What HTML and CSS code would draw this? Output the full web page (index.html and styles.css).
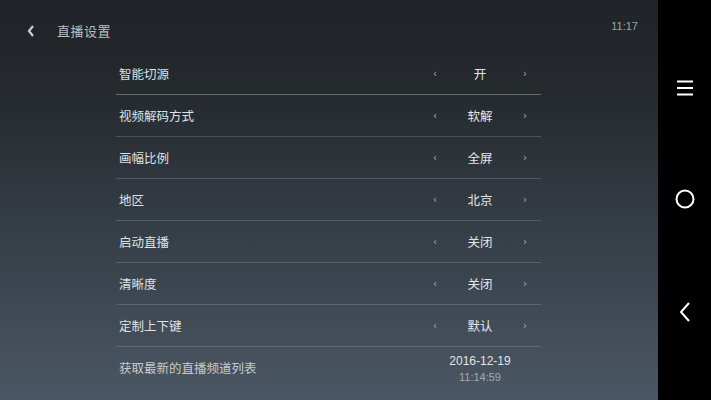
FILE: index.html
```html
<!DOCTYPE html>
<html lang="zh">
<head>
<meta charset="utf-8">
<link rel="stylesheet" href="styles.css">
</head>
<body>
<div class="screen">
  <div class="main">
    <div class="header">
      <svg class="back" width="10" height="14" viewBox="0 0 10 14"><path d="M7 2 L3 7 L7 12" fill="none" stroke="#c9cdd0" stroke-width="2.2"/></svg>
      <span class="title">直播设置</span>
      <span class="clock">11:17</span>
    </div>
    <div class="list">
      <div class="row first"><span class="label">智能切源</span><div class="sel"><span class="ch">‹</span><span class="val">开</span><span class="ch">›</span></div></div>
      <div class="row"><span class="label">视频解码方式</span><div class="sel"><span class="ch">‹</span><span class="val">软解</span><span class="ch">›</span></div></div>
      <div class="row"><span class="label">画幅比例</span><div class="sel"><span class="ch">‹</span><span class="val">全屏</span><span class="ch">›</span></div></div>
      <div class="row"><span class="label">地区</span><div class="sel"><span class="ch">‹</span><span class="val">北京</span><span class="ch">›</span></div></div>
      <div class="row"><span class="label">启动直播</span><div class="sel"><span class="ch">‹</span><span class="val">关闭</span><span class="ch">›</span></div></div>
      <div class="row"><span class="label">清晰度</span><div class="sel"><span class="ch">‹</span><span class="val">关闭</span><span class="ch">›</span></div></div>
      <div class="row"><span class="label">定制上下键</span><div class="sel"><span class="ch">‹</span><span class="val">默认</span><span class="ch">›</span></div></div>
      <div class="row last"><span class="label dim">获取最新的直播频道列表</span><div class="stamp"><span class="date">2016-12-19</span><span class="time">11:14:59</span></div></div>
    </div>
  </div>
  <div class="nav">
    <svg width="20" height="18" viewBox="0 0 20 18"><path d="M2 2.5H18M2 9H18M2 15.5H18" stroke="#fff" stroke-width="2"/></svg>
    <svg width="22" height="22" viewBox="0 0 22 22"><circle cx="11" cy="11" r="8.5" fill="none" stroke="#fff" stroke-width="2"/></svg>
    <svg width="14" height="22" viewBox="0 0 14 22"><path d="M11 2 L3 11 L11 20" fill="none" stroke="#fff" stroke-width="2"/></svg>
  </div>
</div>
</body>
</html>
```
FILE: styles.css
```css
html, body {
  margin: 0;
  padding: 0;
  width: 711px;
  height: 400px;
  overflow: hidden;
  background: #000;
  font-family: "Noto Sans CJK SC", "Noto Sans", sans-serif;
}
.screen {
  display: flex;
  width: 711px;
  height: 400px;
}
.main {
  width: 658px;
  height: 400px;
  background: linear-gradient(180deg, #202327 0%, #262b30 25%, #343c44 55%, #4b5764 100%);
  display: flex;
  flex-direction: column;
}
.header {
  height: 52px;
  display: flex;
  align-items: flex-start;
  padding: 0 20px 0 26px;
  box-sizing: border-box;
}
.back {
  margin-top: 24px;
}
.title {
  margin-left: 21px;
  margin-top: 21px;
  font-size: 13px;
  line-height: 19px;
  color: #b9bec2;
  letter-spacing: 0.5px;
}
.clock {
  margin-left: auto;
  margin-top: 19px;
  font-family: "Liberation Sans", sans-serif;
  font-size: 11px;
  line-height: 15px;
  color: #9ea3a7;
}
.list {
  margin-left: 116px;
  width: 425px;
  display: flex;
  flex-direction: column;
}
.row {
  height: 42px;
  display: flex;
  align-items: center;
  border-top: 1px solid rgba(150, 160, 168, 0.32);
  box-sizing: border-box;
}
.row.first {
  border-top: none;
}
.row.first + .row {
  border-top: 1px solid rgba(140, 165, 150, 0.55);
}
.label {
  padding-left: 3px;
  font-size: 12.5px;
  color: #dfe2e4;
  flex: 1;
}
.label.dim {
  color: #c5cacd;
}
.sel {
  display: flex;
  align-items: center;
  width: 100px;
  margin-right: 11px;
}
.ch {
  font-family: "DejaVu Sans", sans-serif;
  font-size: 10px;
  color: #a9afb3;
  width: 10px;
  text-align: center;
}
.val {
  flex: 1;
  text-align: center;
  font-size: 12.5px;
  color: #e3e6e8;
}
.stamp {
  width: 100px;
  margin-right: 11px;
  display: flex;
  flex-direction: column;
  align-items: center;
  font-family: "Liberation Sans", sans-serif;
  line-height: 16px;
  margin-top: 2px;
}
.date {
  font-size: 12px;
  color: #e2e5e7;
}
.time {
  font-size: 11px;
  color: #a4abb1;
}
.nav {
  width: 53px;
  height: 400px;
  background: #000;
  display: flex;
  flex-direction: column;
  align-items: center;
  padding-top: 79px;
  box-sizing: border-box;
  gap: 91px;
}
```
